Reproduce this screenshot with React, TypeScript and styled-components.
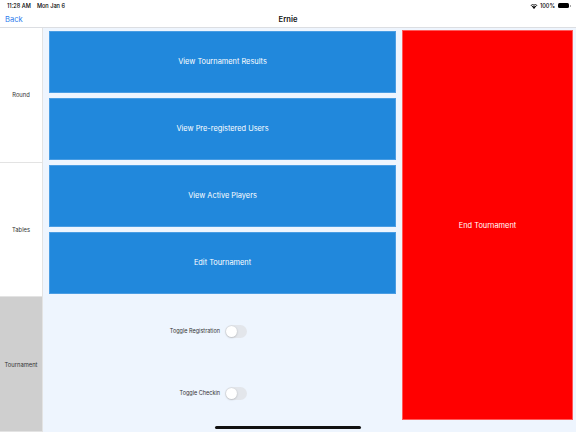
import React, { useState } from "react";
import styled, { createGlobalStyle } from "styled-components";

const Global = createGlobalStyle`
  html, body { margin: 0; padding: 0; background: #ffffff; }
  body { font-family: Inter, "Liberation Sans", Arial, sans-serif; -webkit-font-smoothing: antialiased; }
  * { box-sizing: border-box; }
`;

const Screen = styled.div`
  width: 576px;
  height: 432px;
  display: flex;
  flex-direction: column;
  position: relative;
  overflow: hidden;
  background: #ffffff;
`;

const StatusBar = styled.div`
  height: 11px;
  display: flex;
  align-items: center;
  justify-content: space-between;
  padding: 0 7px;
  font-size: 5.6px;
  color: #000;
  font-weight: 500;
`;

const StatusLeft = styled.div`
  display: flex;
  gap: 6px;
`;

const StatusRight = styled.div`
  display: flex;
  align-items: center;
  gap: 2px;
`;

const Battery = styled.div`
  width: 11px;
  height: 5px;
  border-radius: 1.5px;
  background: #000;
  position: relative;
  margin-left: 1px;
  &::after {
    content: "";
    position: absolute;
    right: -1.8px;
    top: 1.5px;
    width: 1px;
    height: 2px;
    border-radius: 0 1px 1px 0;
    background: #888;
  }
`;

const NavBar = styled.div`
  height: 17px;
  display: grid;
  grid-template-columns: 1fr auto 1fr;
  align-items: center;
  padding: 0 5px;
  border-bottom: 1px solid #dcdee2;
`;

const BackLink = styled.span`
  color: #2f80ed;
  font-size: 7.6px;
  justify-self: start;
`;

const Title = styled.span`
  font-size: 7.6px;
  font-weight: 600;
  color: #111;
`;

const Content = styled.div`
  flex: 1;
  display: flex;
  background: #eef5fe;
`;

const SideColumn = styled.div`
  width: 43px;
  display: flex;
  flex-direction: column;
`;

const SideCell = styled.div<{ $active?: boolean }>`
  flex: 1 1 0;
  display: flex;
  align-items: center;
  justify-content: center;
  background: ${(p) => (p.$active ? "#cfcfcf" : "#ffffff")};
  border-right: 1px solid #e3e3e3;
  border-bottom: 1px solid #e3e3e3;
  font-size: 5.8px;
  color: #333;
`;

const MainColumn = styled.div`
  flex: 1;
  display: flex;
  flex-direction: column;
  padding-left: 3px;
`;

const ButtonStack = styled.div`
  height: 268px;
  display: flex;
  flex-direction: column;
`;

const ActionButton = styled.button`
  flex: 1 1 0;
  margin: 2.5px 3px;
  border: 1px solid #4a9de3;
  background: #2188dc;
  color: #ffffff;
  font-family: inherit;
  font-size: 7.4px;
  cursor: pointer;
  padding: 0;
`;

const ToggleArea = styled.div`
  flex: 1 1 0;
  display: flex;
  flex-direction: column;
  justify-content: space-around;
  padding: 4px 0 8px;
`;

const ToggleRow = styled.label`
  display: grid;
  grid-template-columns: 1fr 1fr;
  align-items: center;
  column-gap: 5px;
`;

const ToggleLabel = styled.span`
  justify-self: end;
  font-size: 5.5px;
  color: #333;
`;

const Track = styled.span<{ $on: boolean }>`
  justify-self: start;
  width: 22px;
  height: 13px;
  border-radius: 7px;
  background: ${(p) => (p.$on ? "#34c759" : "#e3e6eb")};
  position: relative;
  cursor: pointer;
`;

const Knob = styled.span<{ $on: boolean }>`
  position: absolute;
  top: 1px;
  left: ${(p) => (p.$on ? "10px" : "1px")};
  width: 11px;
  height: 11px;
  border-radius: 50%;
  background: #ffffff;
  box-shadow: 0 0.5px 2px rgba(0, 0, 0, 0.25);
`;

const SideAction = styled.div`
  width: 177px;
  display: flex;
  padding: 2px 3px 12px 3px;
`;

const EndButton = styled.button`
  flex: 1;
  border: 1px solid #ff5a5a;
  background: #ff0000;
  color: #ffffff;
  font-family: inherit;
  font-size: 7.4px;
  cursor: pointer;
`;

const HomeIndicator = styled.div`
  position: absolute;
  bottom: 3px;
  left: 215px;
  width: 146px;
  height: 3px;
  border-radius: 2px;
  background: #111;
`;

function Toggle({ label }: { label: string }) {
  const [on, setOn] = useState(false);
  return (
    <ToggleRow onClick={() => setOn(!on)}>
      <ToggleLabel>{label}</ToggleLabel>
      <Track $on={on}>
        <Knob $on={on} />
      </Track>
    </ToggleRow>
  );
}

export default function App() {
  return (
    <Screen>
      <Global />
      <StatusBar>
        <StatusLeft>
          <span>11:28 AM</span>
          <span>Mon Jan 6</span>
        </StatusLeft>
        <StatusRight>
          <svg width="8" height="6" viewBox="0 0 16 12">
            <path d="M8 12 L5.2 9 A4 4 0 0 1 10.8 9 Z" fill="#000" />
            <path d="M3.4 7.2 A6.6 6.6 0 0 1 12.6 7.2 L11.4 8.4 A5 5 0 0 0 4.6 8.4 Z" fill="#000" />
            <path d="M1 4.8 A10 10 0 0 1 15 4.8 L13.8 6 A8.3 8.3 0 0 0 2.2 6 Z" fill="#000" />
          </svg>
          <span>100%</span>
          <Battery />
        </StatusRight>
      </StatusBar>
      <NavBar>
        <BackLink>Back</BackLink>
        <Title>Ernie</Title>
        <span />
      </NavBar>
      <Content>
        <SideColumn>
          <SideCell>Round</SideCell>
          <SideCell>Tables</SideCell>
          <SideCell $active>Tournament</SideCell>
        </SideColumn>
        <MainColumn>
          <ButtonStack>
            <ActionButton>View Tournament Results</ActionButton>
            <ActionButton>View Pre-registered Users</ActionButton>
            <ActionButton>View Active Players</ActionButton>
            <ActionButton>Edit Tournament</ActionButton>
          </ButtonStack>
          <ToggleArea>
            <Toggle label="Toggle Registration" />
            <Toggle label="Toggle Checkin" />
          </ToggleArea>
        </MainColumn>
        <SideAction>
          <EndButton>End Tournament</EndButton>
        </SideAction>
      </Content>
      <HomeIndicator />
    </Screen>
  );
}
